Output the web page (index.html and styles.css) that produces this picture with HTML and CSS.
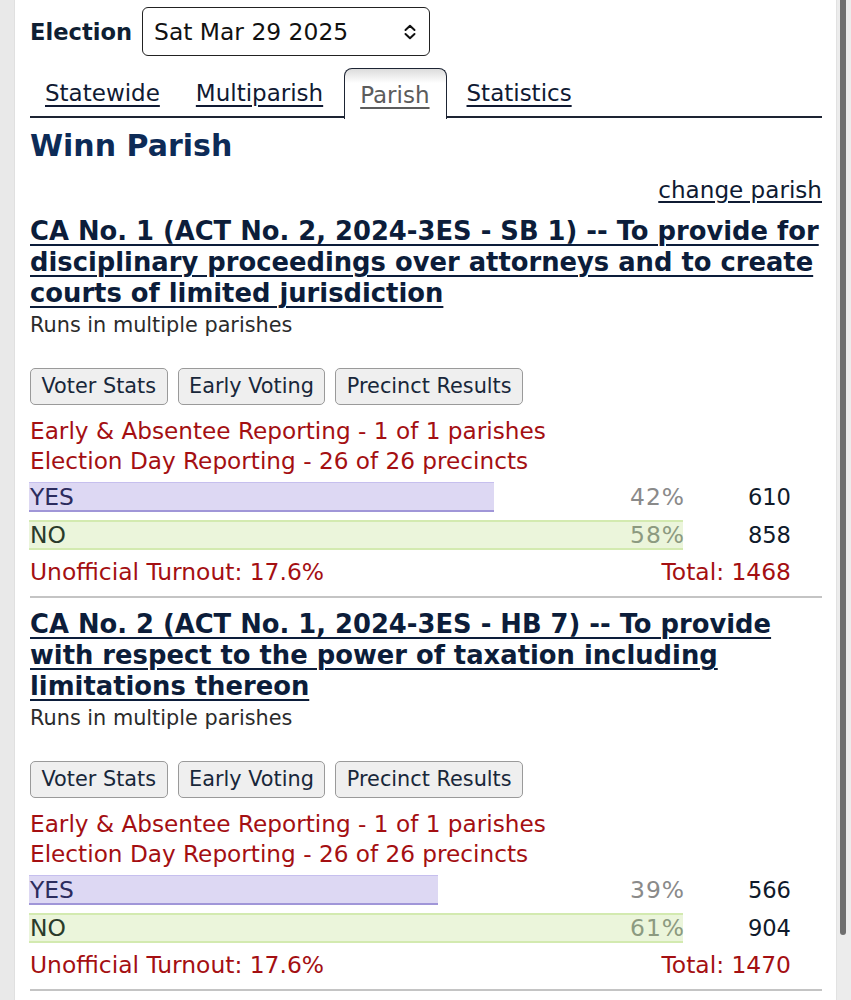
FILE: index.html
```html
<!DOCTYPE html>
<html lang="en">
<head>
<meta charset="utf-8">
<title>Winn Parish - Election Results</title>
<link rel="stylesheet" href="styles.css">
</head>
<body>
<div class="page">
  <div class="gutter"></div>
  <main class="main">
    <div class="election-row">
      <label class="election-label">Election</label>
      <div class="select">
        <span class="select-text">Sat Mar 29 2025</span>
        <svg class="chev" width="14" height="16" viewBox="0 0 14 16"><path d="M2.5 6 L7 1.8 L11.5 6 M2.5 10 L7 14.2 L11.5 10" fill="none" stroke="#111" stroke-width="2" stroke-linecap="round" stroke-linejoin="round"/></svg>
      </div>
    </div>
    <nav class="tabs">
      <a class="tab" href="#">Statewide</a>
      <a class="tab" href="#">Multiparish</a>
      <a class="tab active" href="#">Parish</a>
      <a class="tab" href="#">Statistics</a>
    </nav>
    <h1 class="parish">Winn Parish</h1>
    <div class="change-row"><a class="change" href="#">change parish</a></div>

    <section class="contest">
      <a class="title" href="#">CA No. 1 (ACT No. 2, 2024-3ES - SB 1) -- To provide for disciplinary proceedings over attorneys and to create courts of limited jurisdiction</a>
      <div class="runs">Runs in multiple parishes</div>
      <div class="buttons">
        <button class="btn">Voter Stats</button>
        <button class="btn">Early Voting</button>
        <button class="btn">Precinct Results</button>
      </div>
      <div class="reporting">Early &amp; Absentee Reporting - 1 of 1 parishes<br>Election Day Reporting - 26 of 26 precincts</div>
      <div class="results">
        <div class="row">
          <div class="barcell"><div class="bar yes" style="width:71.1%"></div><span class="choice yes-t">YES</span><span class="pct">42%</span></div>
          <div class="votes">610</div>
        </div>
        <div class="row">
          <div class="barcell"><div class="bar no" style="width:100%"></div><span class="choice no-t">NO</span><span class="pct pct-no">58%</span></div>
          <div class="votes">858</div>
        </div>
      </div>
      <div class="turnout-row"><span>Unofficial Turnout: 17.6%</span><span>Total: 1468</span></div>
    </section>

    <section class="contest">
      <a class="title" href="#">CA No. 2 (ACT No. 1, 2024-3ES - HB 7) -- To provide with respect to the power of taxation including limitations thereon</a>
      <div class="runs">Runs in multiple parishes</div>
      <div class="buttons">
        <button class="btn">Voter Stats</button>
        <button class="btn">Early Voting</button>
        <button class="btn">Precinct Results</button>
      </div>
      <div class="reporting">Early &amp; Absentee Reporting - 1 of 1 parishes<br>Election Day Reporting - 26 of 26 precincts</div>
      <div class="results">
        <div class="row">
          <div class="barcell"><div class="bar yes" style="width:62.6%"></div><span class="choice yes-t">YES</span><span class="pct">39%</span></div>
          <div class="votes">566</div>
        </div>
        <div class="row">
          <div class="barcell"><div class="bar no" style="width:100%"></div><span class="choice no-t">NO</span><span class="pct pct-no">61%</span></div>
          <div class="votes">904</div>
        </div>
      </div>
      <div class="turnout-row"><span>Unofficial Turnout: 17.6%</span><span>Total: 1470</span></div>
    </section>
  </main>
  <div class="scrollbar"><div class="thumb"></div></div>
</div>
</body>
</html>
```

FILE: styles.css
```css
* { box-sizing: border-box; }
html, body { margin: 0; padding: 0; background: #fff; }
body {
  font-family: "DejaVu Sans", Verdana, sans-serif;
  color: #1b2a3d;
  overflow: hidden;
}
.page {
  display: flex;
  width: 851px;
  height: 1000px;
  overflow: hidden;
}
.gutter {
  width: 15px;
  flex: none;
  background: #e9e9e9;
  border-right: 1px solid #e0e0e0;
}
.main {
  flex: 1;
  padding: 7px 14px 0 15px;
}
.scrollbar {
  width: 15px;
  flex: none;
  background: #ececec;
  border-left: 1px solid #e2e2e2;
  position: relative;
}
.thumb {
  position: absolute;
  left: 3px;
  top: 0;
  width: 6px;
  height: 935px;
  background: #6f6f6f;
  border-radius: 0 0 3px 3px;
}

/* election selector */
.election-row {
  display: flex;
  align-items: center;
  gap: 10px;
}
.election-label {
  font-weight: bold;
  font-size: 22.6px;
  color: #0f1f33;
}
.select {
  width: 288px;
  height: 49px;
  border: 1.5px solid #222;
  border-radius: 6px;
  display: flex;
  align-items: center;
  justify-content: space-between;
  padding: 0 12px 0 11px;
}
.select-text {
  font-size: 23.4px;
  color: #111;
}
.chev { display: block; }

/* tabs */
.tabs {
  display: flex;
  margin-top: 12px;
  border-bottom: 2px solid #1d2433;
  height: 50px;
}
.tab {
  font-size: 23px;
  color: #101a33;
  text-decoration: underline;
  text-underline-offset: 4px;
  text-decoration-thickness: 2px;
  padding: 0 16px 0 15px;
  margin-right: 5px;
  display: flex;
  align-items: center;
  padding-top: 1px;
}
.tab.active {
  color: #5c5c5c;
  border: 1.5px solid #1d2433;
  border-bottom: none;
  border-radius: 8px 8px 0 0;
  background: linear-gradient(#dcdcdc 0, #fff 14px, #fff 100%);
  margin-bottom: -2px;
  height: 51px;
  padding-top: 2px;
}

.parish {
  margin: 10px 0 0;
  font-size: 30px;
  line-height: 36px;
  color: #0d2b57;
}
.change-row {
  display: flex;
  justify-content: flex-end;
  margin-top: 11px;
}
.change {
  font-size: 23.1px;
  line-height: 30px;
  color: #0f1b33;
  text-decoration: underline;
  text-underline-offset: 3px;
}

/* contest */
.contest {
  border-bottom: 2px solid #c4c4c4;
  padding-bottom: 9px;
  margin-top: 11px;
}
.contest + .contest { margin-top: 11px; }
.title {
  display: block;
  font-weight: bold;
  font-size: 25.8px;
  line-height: 31px;
  color: #0c1d3a;
  text-decoration: underline;
  text-underline-offset: 4px;
  text-decoration-thickness: 2px;
}
.runs {
  font-size: 20.8px;
  line-height: 28px;
  color: #2b2b2b;
  margin-top: 2px;
}
.buttons {
  display: flex;
  gap: 10px;
  margin-top: 29px;
}
.btn {
  font-family: inherit;
  font-size: 20.8px;
  color: #18273a;
  background: #efefef;
  border: 1.5px solid #9a9a9a;
  border-radius: 5px;
  height: 37px;
  padding: 0 10.5px;
  line-height: 1;
}
.reporting {
  margin-top: 11px;
  font-size: 23.2px;
  line-height: 30px;
  color: #a40f12;
}
.results {
  margin-top: 6px;
  display: flex;
  flex-direction: column;
  gap: 8px;
}
.row {
  display: grid;
  grid-template-columns: 654px 107px;
  height: 30px;
}
.barcell {
  position: relative;
  display: flex;
  align-items: center;
  justify-content: space-between;
  font-size: 23.4px;
}
.bar {
  position: absolute;
  left: -1px;
  top: 0;
  bottom: 0;
}
.bar.yes {
  background: #ddd8f3;
  border-top: 1.5px solid #c6bfee;
  border-bottom: 2px solid #a096d8;
}
.bar.no {
  background: #ebf5db;
  border-top: 2px solid #d3eab0;
  border-bottom: 2px solid #d3eab0;
}
.choice, .pct { position: relative; }
.pct { letter-spacing: 1px; margin-right: -1px; }
.yes-t { color: #2c2c5e; }
.no-t { color: #2a3b2a; }
.pct { color: #8a8a8a; }
.pct-no { color: #8c9a80; }
.votes {
  text-align: right;
  font-size: 22.6px;
  line-height: 30px;
  color: #0f1a2b;
}
.turnout-row {
  width: 761px;
  display: flex;
  justify-content: space-between;
  font-size: 23.4px;
  line-height: 30px;
  color: #a40f12;
  margin-top: 7px;
}
```
